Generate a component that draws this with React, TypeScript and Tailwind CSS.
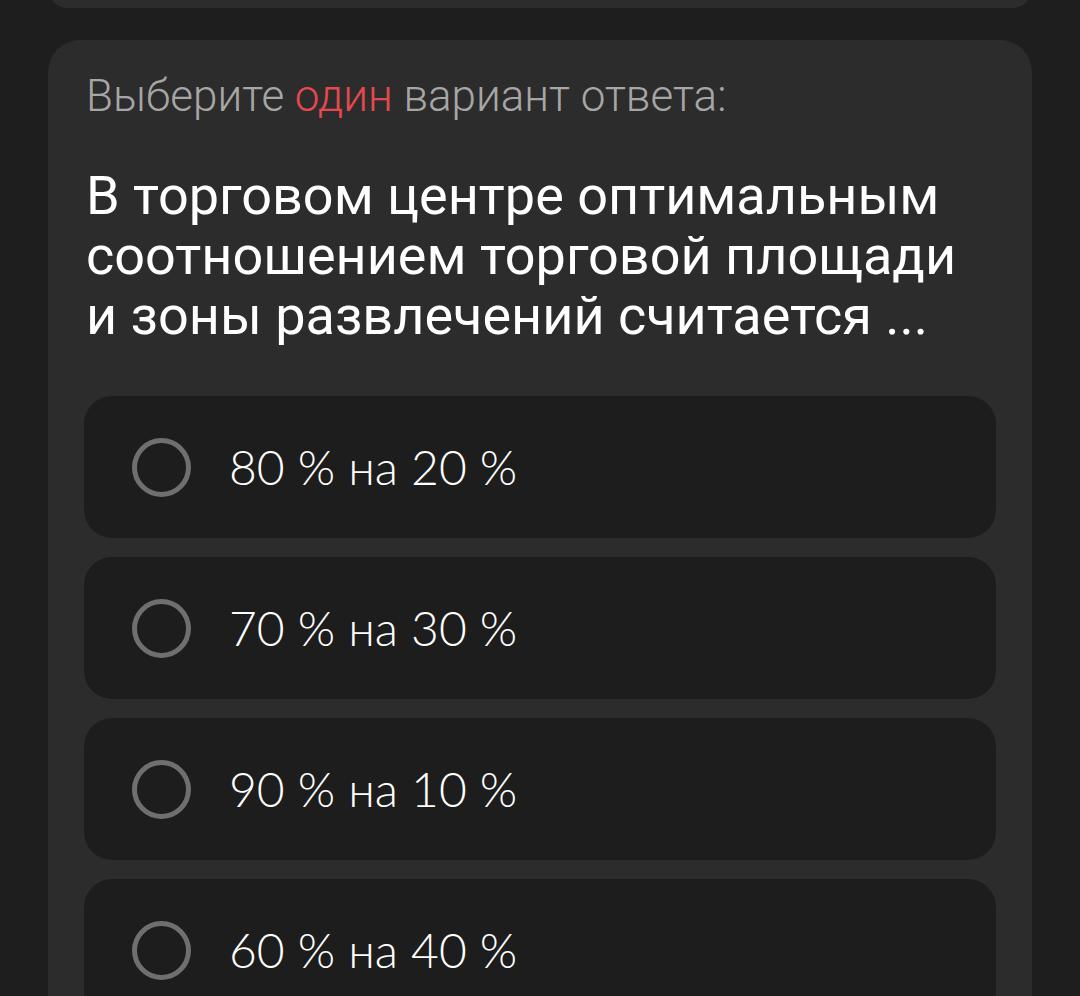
const options = ["80 % на 20 %", "70 % на 30 %", "90 % на 10 %", "60 % на 40 %"];

function Radio() {
  return <span className="block w-[59px] h-[59px] shrink-0 rounded-full border-[5px] border-[#6f6f6f]" />;
}

export default function App() {
  return (
    <div
      className="min-h-screen bg-[#1e1e1e] px-12 overflow-hidden"
      style={{ fontFamily: "Roboto, 'Noto Sans', sans-serif" }}
    >
      {/* bottom of the previous card */}
      <div className="h-[40px] -mt-[32px] rounded-[32px] bg-[#2c2c2c]" />

      <div className="mt-8 rounded-[32px] bg-[#2c2c2c] px-9 pt-8 pb-10">
        <p className="text-[44px] leading-[48px] font-light text-[#a6a6a6] pl-[2px]">
          Выберите <span className="text-[#e5484d]">один</span> вариант ответа:
        </p>

        <h2 className="mt-[46px] text-[54px] leading-[60px] font-normal text-white pl-[2px]">
          В торговом центре оптимальным соотношением торговой площади и зоны развлечений считается ...
        </h2>

        <div className="mt-[50px] flex flex-col gap-[19px]">
          {options.map((o) => (
            <div key={o} className="h-[142px] flex items-center gap-[38px] pl-12 rounded-[28px] bg-[#1d1d1d]">
              <Radio />
              <span
                className="text-[48px] leading-none font-light text-white"
                style={{ fontFamily: "Lato, Roboto, sans-serif" }}
              >
                {o}
              </span>
            </div>
          ))}
        </div>
      </div>
    </div>
  );
}
